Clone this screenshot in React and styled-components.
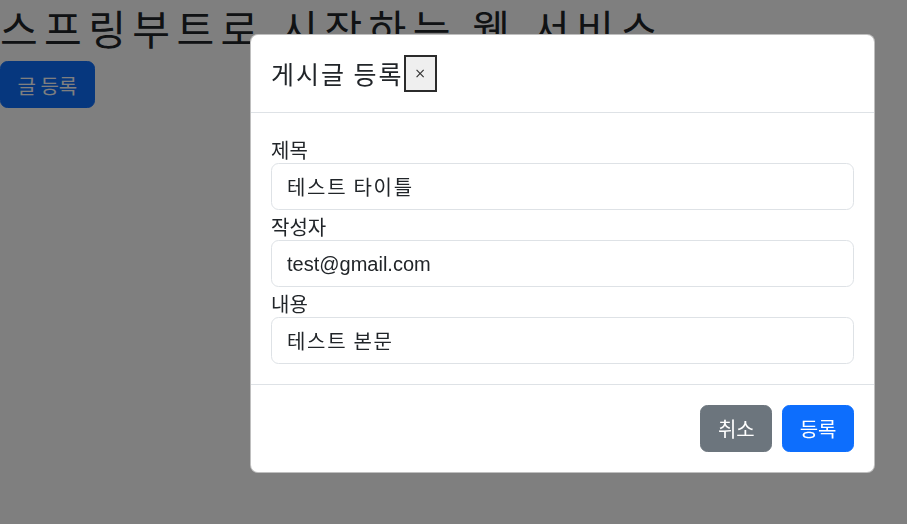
import React from 'react';
import styled, { createGlobalStyle } from 'styled-components';

const GlobalStyle = createGlobalStyle`
  *, *::before, *::after {
    box-sizing: border-box;
  }
  body {
    margin: 0;
    background: #fff;
    color: #212529;
    font-family: "Noto Sans CJK KR", "Liberation Sans", sans-serif;
    font-size: 20px;
    line-height: 1.5;
  }
`;

const Heading = styled.h1`
  margin: 0 0 10px;
  padding-top: 3px;
  font-size: 41px;
  font-weight: 400;
  line-height: 48px;
  letter-spacing: 6.4px;
  white-space: nowrap;
`;

const Button = styled.button`
  display: inline-block;
  padding: 8.5px 16.5px 6.5px;
  font-family: inherit;
  font-size: 20px;
  line-height: 30px;
  color: #fff;
  border: 1px solid ${(p) => (p.$variant === 'secondary' ? '#6c757d' : '#0d6efd')};
  background: ${(p) => (p.$variant === 'secondary' ? '#6c757d' : '#0d6efd')};
  border-radius: 7.5px;
  cursor: pointer;
`;

const Backdrop = styled.div`
  position: fixed;
  inset: 0;
  background: rgba(0, 0, 0, 0.5);
`;

const Dialog = styled.div`
  position: fixed;
  top: 34px;
  left: 250px;
  width: 625px;
  background: #fff;
  border: 1px solid rgba(0, 0, 0, 0.25);
  border-radius: 8px;
`;

const Header = styled.div`
  display: flex;
  align-items: center;
  padding: 19.5px 20px;
  border-bottom: 1px solid #dee2e6;
`;

const Title = styled.h5`
  margin: 0;
  font-size: 25px;
  font-weight: 400;
  line-height: 37.5px;
  letter-spacing: 2px;
`;

const CloseButton = styled.button`
  width: 33px;
  height: 37px;
  padding: 0;
  font-family: "DejaVu Sans", sans-serif;
  font-size: 14px;
  line-height: 1;
  color: #333;
  background: #efefef;
  border: 2px solid #2b2b2b;
`;

const Body = styled.div`
  padding: 20px;
`;

const Label = styled.label`
  display: block;
  padding-top: 3px;
  font-size: 20px;
  line-height: 27px;
`;

const Input = styled.input`
  display: block;
  width: 100%;
  padding: 8.5px 15px 6.5px;
  font-family: ${(p) =>
    p.$latin ? '"Liberation Sans", sans-serif' : 'inherit'};
  font-size: 20px;
  line-height: 30px;
  letter-spacing: ${(p) => (p.$latin ? '0' : '1.7px')};
  color: #212529;
  background: #fff;
  border: 1px solid #dee2e6;
  border-radius: 7.5px;
  outline: none;
`;

const Footer = styled.div`
  display: flex;
  justify-content: flex-end;
  gap: 10px;
  padding: 20px;
  border-top: 1px solid #dee2e6;
`;

const fields = [
  { id: 'title', label: '제목', value: '테스트 타이틀', latin: false },
  { id: 'author', label: '작성자', value: 'test@gmail.com', latin: true },
  { id: 'content', label: '내용', value: '테스트 본문', latin: false },
];

export default function App() {
  return (
    <>
      <GlobalStyle />
      <Heading>스프링부트로 시작하는 웹 서비스</Heading>
      <Button type="button">글 등록</Button>

      <Backdrop />
      <Dialog role="dialog">
        <Header>
          <Title>게시글 등록</Title>
          <CloseButton type="button" aria-label="Close">×</CloseButton>
        </Header>
        <Body>
          {fields.map((f) => (
            <div key={f.id}>
              <Label htmlFor={f.id}>{f.label}</Label>
              <Input id={f.id} type="text" defaultValue={f.value} $latin={f.latin} />
            </div>
          ))}
        </Body>
        <Footer>
          <Button type="button" $variant="secondary">취소</Button>
          <Button type="button">등록</Button>
        </Footer>
      </Dialog>
    </>
  );
}
